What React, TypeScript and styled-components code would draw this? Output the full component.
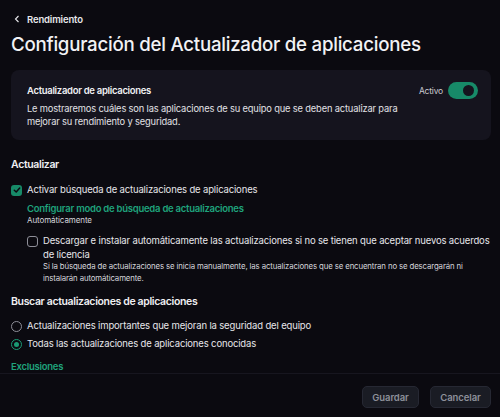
import styled, { createGlobalStyle } from "styled-components";

const Global = createGlobalStyle`
  html, body {
    margin: 0;
    padding: 0;
    background: #0b0a10;
  }
  body {
    font-family: Inter, "Noto Sans", sans-serif;
    color: #e8e8ec;
  }
`;

const Page = styled.div`
  width: 500px;
  height: 417px;
  display: flex;
  flex-direction: column;
  background: #0b0a10;
  overflow: hidden;
`;

const Content = styled.div`
  flex: 1;
  min-height: 0;
  overflow: hidden;
  padding: 12px 9px 0 11px;
`;

const BackLink = styled.div`
  display: flex;
  align-items: center;
  gap: 7px;
  font-size: 9.5px;
  font-weight: 600;
  letter-spacing: -0.15px;
  color: #e8e8ec;
  height: 14px;
  margin-left: 3px;
`;

const Title = styled.h1`
  margin: 5px 0 0;
  font-size: 18.7px;
  font-weight: 500;
  letter-spacing: -0.25px;
  color: #f2f2f5;
  line-height: 28px;
`;

const Card = styled.div`
  margin-top: 11px;
  background: #15141e;
  border-radius: 8px;
  padding: 14px 13px 12px 16px;
  display: flex;
  justify-content: space-between;
  align-items: flex-start;
  height: 70px;
  box-sizing: border-box;
`;

const CardTitle = styled.div`
  font-size: 9.5px;
  font-weight: 600;
  letter-spacing: -0.3px;
  color: #f0f0f3;
  line-height: 14px;
`;

const CardText = styled.div`
  margin-top: 4px;
  font-size: 9.3px;
  letter-spacing: -0.15px;
  line-height: 13px;
  color: #e2e2e6;
  max-width: 395px;
`;

const ToggleWrap = styled.div`
  display: flex;
  align-items: center;
  gap: 5px;
  font-size: 8.5px;
  letter-spacing: -0.2px;
  color: #c9c9cf;
  margin-top: -2px;
`;

const Toggle = styled.div<{ $on: boolean }>`
  width: 30px;
  height: 17px;
  border-radius: 9px;
  background: ${({ $on }) => ($on ? "#178a68" : "#3a3a44")};
  position: relative;
  &::after {
    content: "";
    position: absolute;
    top: 3px;
    left: ${({ $on }) => ($on ? "15px" : "3px")};
    width: 11px;
    height: 11px;
    border-radius: 50%;
    background: #15141e;
  }
`;

const SectionTitle = styled.div<{ $top: number }>`
  margin-top: ${({ $top }) => $top}px;
  font-size: 10.5px;
  font-weight: 600;
  letter-spacing: -0.35px;
  color: #f0f0f3;
  line-height: 16px;
`;

const OptionRow = styled.div<{ $indent?: boolean; $top: number }>`
  display: flex;
  align-items: flex-start;
  gap: 5px;
  margin-top: ${({ $top }) => $top}px;
  margin-left: ${({ $indent }) => ($indent ? "16px" : "0")};
`;

const Box = styled.div<{ $checked: boolean }>`
  width: 11px;
  height: 11px;
  flex-shrink: 0;
  border-radius: 3px;
  margin-top: 1.5px;
  box-sizing: border-box;
  display: flex;
  align-items: center;
  justify-content: center;
  background: ${({ $checked }) => ($checked ? "#178a68" : "transparent")};
  border: ${({ $checked }) => ($checked ? "none" : "1.5px solid #8e8e98")};
`;

const Radio = styled.div<{ $checked: boolean }>`
  width: 11px;
  height: 11px;
  flex-shrink: 0;
  border-radius: 50%;
  margin-top: 1.5px;
  box-sizing: border-box;
  border: 1.5px solid ${({ $checked }) => ($checked ? "#1a9a74" : "#8e8e98")};
  display: flex;
  align-items: center;
  justify-content: center;
  &::after {
    content: "";
    display: ${({ $checked }) => ($checked ? "block" : "none")};
    width: 5px;
    height: 5px;
    border-radius: 50%;
    background: #1a9a74;
  }
`;

const OptionText = styled.div`
  font-size: 9.5px;
  letter-spacing: -0.15px;
  line-height: 14px;
  color: #e6e6ea;
`;

const Note = styled.div`
  margin-top: -2px;
  font-size: 7.8px;
  letter-spacing: -0.12px;
  line-height: 12px;
  color: #d6d6dc;
`;

const GreenLink = styled.div<{ $top: number; $indent?: boolean }>`
  margin-top: ${({ $top }) => $top}px;
  margin-left: ${({ $indent }) => ($indent ? "16px" : "0")};
  font-size: 9.5px;
  font-weight: 600;
  letter-spacing: -0.25px;
  color: #1fa37c;
  line-height: 13px;
`;

const SubValue = styled.div`
  margin-left: 16px;
  font-size: 8px;
  letter-spacing: -0.1px;
  line-height: 10px;
  color: #d6d6dc;
`;

const Footer = styled.div`
  flex-shrink: 0;
  height: 44px;
  box-sizing: border-box;
  border-top: 1px solid #17161f;
  display: flex;
  justify-content: flex-end;
  align-items: center;
  gap: 11px;
  padding: 0 9px 0 0;
`;

const Button = styled.button<{ $w: number }>`
  width: ${({ $w }) => $w}px;
  height: 22px;
  border-radius: 5px;
  border: 1px solid #262833;
  background: #1a1c24;
  color: #8d909a;
  font-family: Inter, "Noto Sans", sans-serif;
  font-size: 9.5px;
  font-weight: 600;
  letter-spacing: -0.1px;
  padding: 0;
  margin-top: 3px;
`;

const Check = () => (
  <svg width="8" height="8" viewBox="0 0 8 8">
    <path d="M1.3 4.2 L3.2 6 L6.7 2" fill="none" stroke="#0b0a10" strokeWidth="1.5" strokeLinecap="round" strokeLinejoin="round" />
  </svg>
);

export default function App() {
  return (
    <Page>
      <Global />
      <Content>
        <BackLink>
          <svg width="6" height="8" viewBox="0 0 6 8">
            <path d="M4.5 1 L1.5 4 L4.5 7" fill="none" stroke="#e8e8ec" strokeWidth="1.1" />
          </svg>
          Rendimiento
        </BackLink>
        <Title>Configuración del Actualizador de aplicaciones</Title>

        <Card>
          <div>
            <CardTitle>Actualizador de aplicaciones</CardTitle>
            <CardText>
              Le mostraremos cuáles son las aplicaciones de su equipo que se deben actualizar para mejorar su
              rendimiento y seguridad.
            </CardText>
          </div>
          <ToggleWrap>
            Activo
            <Toggle $on={true} />
          </ToggleWrap>
        </Card>

        <SectionTitle $top={17}>Actualizar</SectionTitle>
        <OptionRow $top={10}>
          <Box $checked={true}>
            <Check />
          </Box>
          <OptionText>Activar búsqueda de actualizaciones de aplicaciones</OptionText>
        </OptionRow>
        <GreenLink $top={5} $indent>
          Configurar modo de búsqueda de actualizaciones
        </GreenLink>
        <SubValue>Automáticamente</SubValue>
        <OptionRow $indent $top={9}>
          <Box $checked={false} />
          <div>
            <OptionText>
              Descargar e instalar automáticamente las actualizaciones si no se tienen que aceptar nuevos acuerdos de
              licencia
            </OptionText>
            <Note>
              Si la búsqueda de actualizaciones se inicia manualmente, las actualizaciones que se encuentran no se
              descargarán ni instalarán automáticamente.
            </Note>
          </div>
        </OptionRow>

        <SectionTitle $top={10}>Buscar actualizaciones de aplicaciones</SectionTitle>
        <OptionRow $top={9}>
          <Radio $checked={false} />
          <OptionText>Actualizaciones importantes que mejoran la seguridad del equipo</OptionText>
        </OptionRow>
        <OptionRow $top={4}>
          <Radio $checked={true} />
          <OptionText>Todas las actualizaciones de aplicaciones conocidas</OptionText>
        </OptionRow>
        <GreenLink $top={9}>Exclusiones</GreenLink>
      </Content>
      <Footer>
        <Button $w={57}>Guardar</Button>
        <Button $w={61}>Cancelar</Button>
      </Footer>
    </Page>
  );
}
